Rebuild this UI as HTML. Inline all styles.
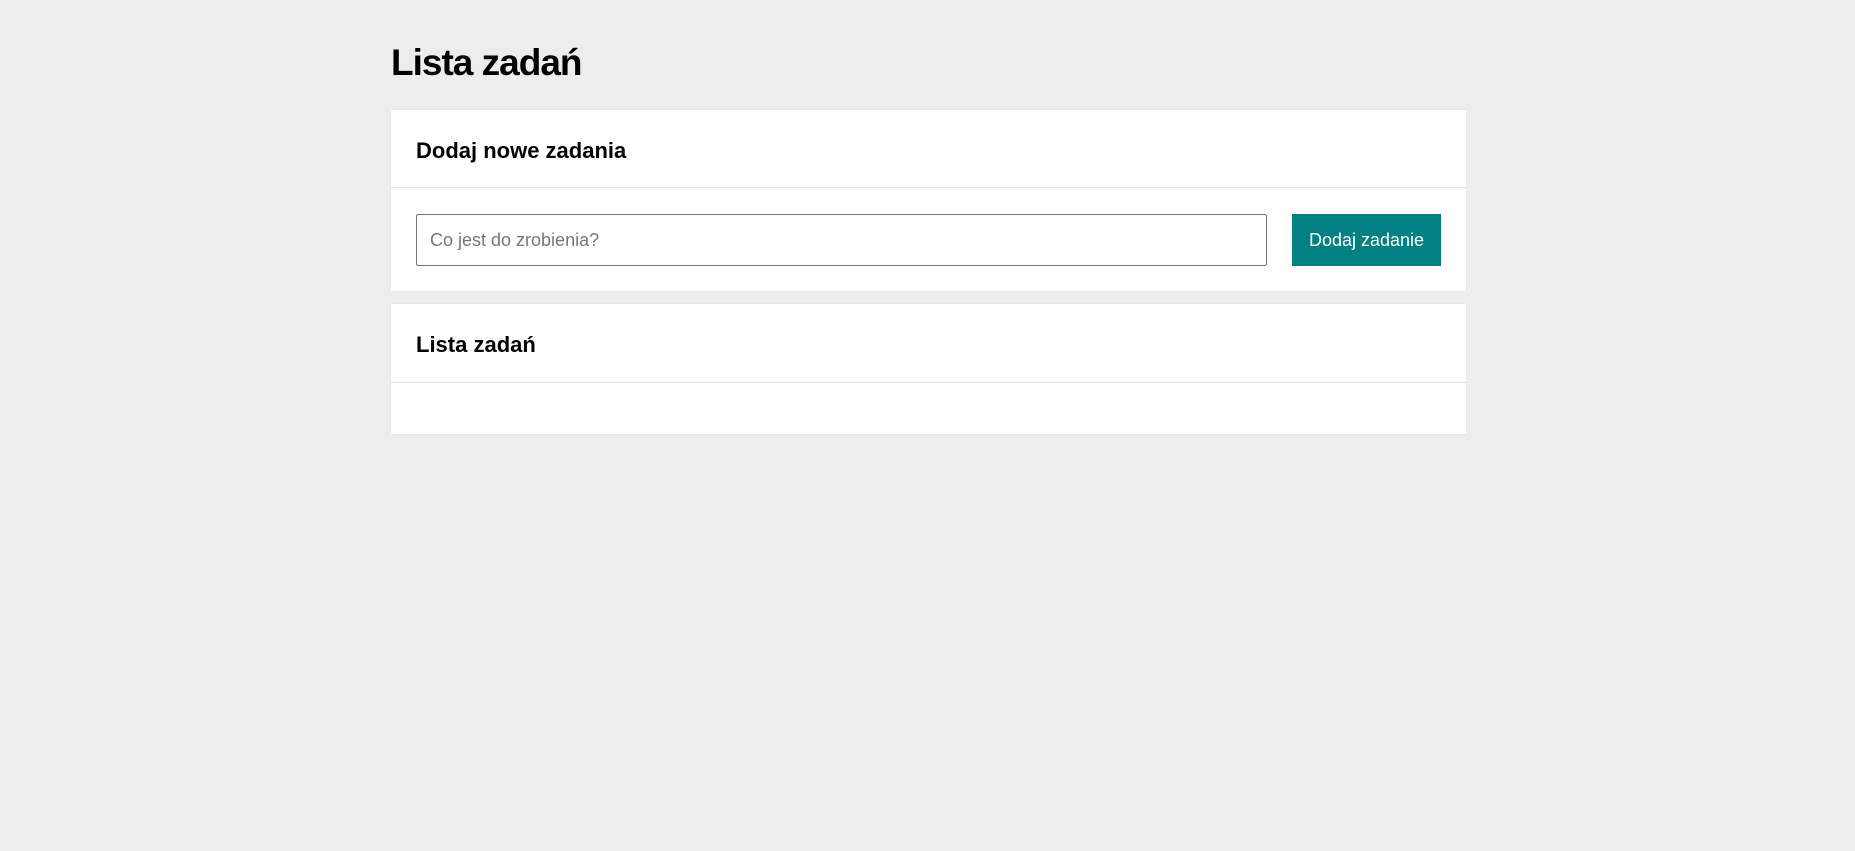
<!DOCTYPE html>
<html><head><meta charset="utf-8"><style>
body{margin:0;background:#ededed;font-family:"Liberation Sans",sans-serif;width:1855px;height:851px;overflow:hidden}
h1{position:absolute;left:391px;top:42px;margin:0;font-size:37px;font-weight:bold;letter-spacing:-1px;color:#000}
.card{position:absolute;left:391px;width:1075px;background:#fff;box-shadow:0 0 1px rgba(0,0,0,.1)}
.hd{height:78px;border-bottom:1px solid #e2e2e2;box-sizing:border-box;position:relative}
.hd span{position:absolute;left:25px;top:28px;font-size:22px;font-weight:bold;letter-spacing:0}
.in{position:absolute;left:25px;top:104px;width:851px;height:52px;border:1px solid #777;box-sizing:border-box;font-size:18px;color:#777;padding:15px 13px;border-radius:2px}
.btn{position:absolute;left:901px;top:104px;width:149px;height:52px;background:#008080;color:#fff;font-size:18px;line-height:52px;text-align:center}
</style></head><body>
<h1>Lista zadań</h1>
<div class="card" style="top:110px;height:181px"><div class="hd"><span>Dodaj nowe zadania</span></div>
<div class="in">Co jest do zrobienia?</div><div class="btn">Dodaj zadanie</div></div>
<div class="card" style="top:304px;height:130px"><div class="hd" style="height:79px"><span>Lista zadań</span></div></div>
</body></html>
